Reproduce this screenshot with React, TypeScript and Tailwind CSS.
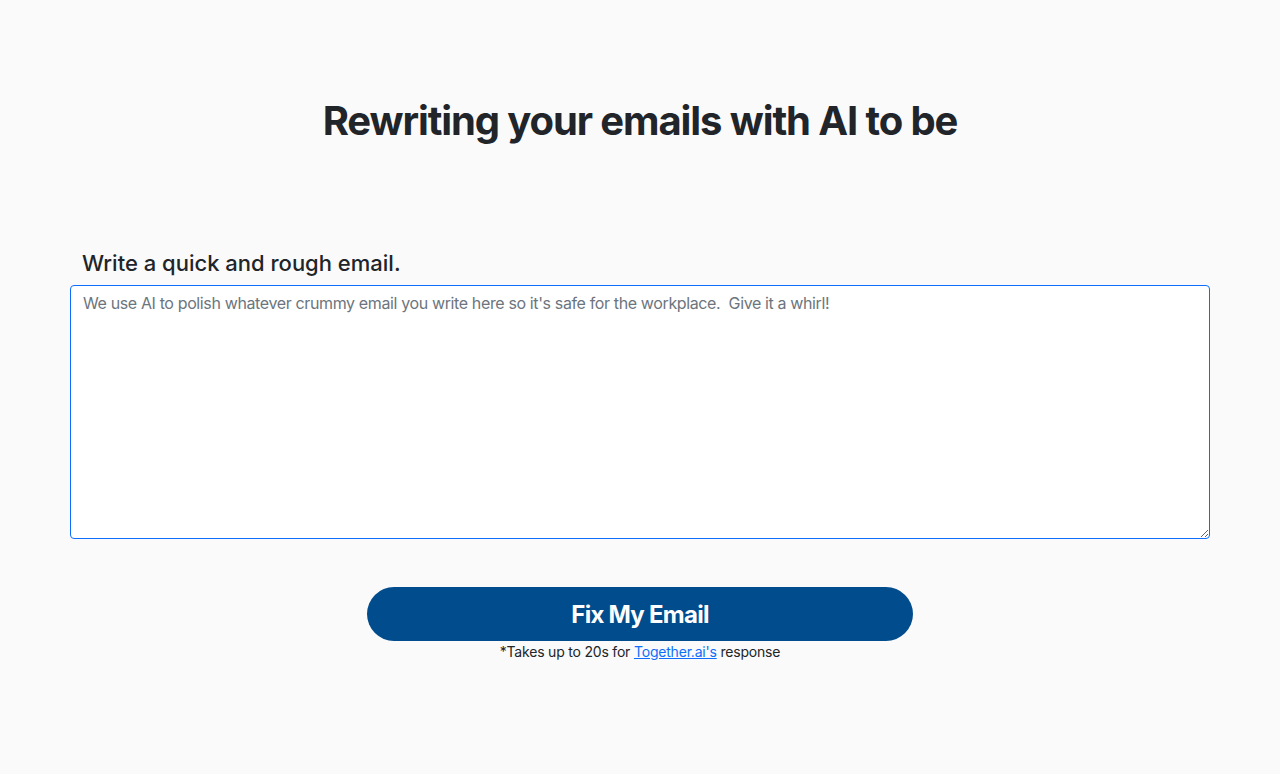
export default function App() {
  return (
    <div className="min-h-[774px] bg-[#fafafa] font-['Inter',sans-serif] text-[#212529]">
      <div className="flex flex-col items-center pt-[96px]">
        <h1 className="text-[40px] font-bold leading-[50px] tracking-[-1.1px]">Rewriting your emails with AI to be</h1>
      </div>

      {/* Input section */}
      <div className="mx-[70px] mt-[101px]">
        <label className="block pl-[12px] text-[22px] font-medium leading-[32px] mb-[6px]">
          Write a quick and rough email.
        </label>
        <textarea
          className="block w-full h-[254px] rounded-[4px] border border-[#0d6efd] bg-white px-[12px] py-[5px] text-[16px] leading-[24px] tracking-[-0.37px] text-[#212529] placeholder:text-[#6c757d] outline-none resize-y"
          placeholder="We use AI to polish whatever crummy email you write here so it's safe for the workplace.  Give it a whirl!"
        />
      </div>

      <div className="flex flex-col items-center mt-[48px]">
        <button className="w-[546px] h-[54px] rounded-full bg-[#004c8c] text-white text-[24px] font-bold tracking-[-0.75px] pt-[2px]">
          Fix My Email
        </button>
        <p className="text-[14px] leading-[21px] text-[#212529] tracking-[-0.2px]">
          *Takes up to 20s for{' '}
          <a href="#" className="text-[#0d6efd] underline">
            Together.ai's
          </a>{' '}
          response
        </p>
      </div>
    </div>
  );
}
